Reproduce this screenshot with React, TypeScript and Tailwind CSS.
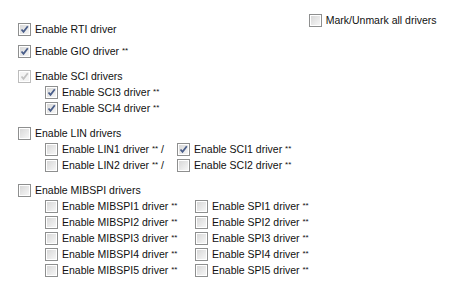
import React, { FC } from "react";

type State = "on" | "off" | "dim";

const Box: FC<{ state?: State }> = ({ state = "off" }) => (
  <span
    className={`relative flex h-[13px] w-[13px] shrink-0 items-center justify-center border ${
      state === "dim" ? "border-[#bcbcbc]" : "border-[#8e8f8f]"
    } bg-white`}
  >
    <span
      className={`absolute inset-[1px] ${
        state === "dim" ? "bg-[#f4f4f4]" : "bg-gradient-to-br from-[#d8d8d8] to-[#f6f6f6]"
      }`}
    />
    {state !== "off" && (
      <svg width="9" height="9" viewBox="0 0 9 9" className="relative">
        <path
          d="M1.5 4.5 L3.5 6.8 L7.8 1.2"
          fill="none"
          stroke={state === "dim" ? "#c2c2c2" : "#4a5e8a"}
          strokeWidth="1.8"
        />
      </svg>
    )}
  </span>
);

// labels ending in "**" get the small raised asterisks of the dialog font
const Label: FC<{ text: string }> = ({ text }) => {
  const i = text.indexOf("**");
  if (i < 0) return <span className="whitespace-nowrap leading-none">{text}</span>;
  return (
    <span className="whitespace-nowrap leading-none">
      {text.slice(0, i)}
      <span className="relative top-[-2px] text-[8px]">**</span>
      {text.slice(i + 2)}
    </span>
  );
};

const Check: FC<{ label: string; state?: State; className?: string }> = ({
  label,
  state = "off",
  className = "",
}) => (
  <div className={`flex h-[16px] items-center gap-[4px] ${className}`}>
    <Box state={state} />
    <Label text={label} />
  </div>
);

const App: FC = () => {
  return (
    <div
      className="relative h-[288px] w-[460px] overflow-hidden bg-white text-[10.5px] text-[#111]"
      style={{ fontFamily: '"Liberation Sans", Arial, sans-serif' }}
    >
      <div className="flex">
        <div className="flex flex-col pl-[18px] pt-[21px]">
          <Check label="Enable RTI driver" state="on" />
          <Check label="Enable GIO driver **" state="on" className="mt-[6px]" />

          <Check label="Enable SCI drivers" state="dim" className="mt-[9px]" />
          <div className="flex flex-col pl-[27px]">
            <Check label="Enable SCI3 driver **" state="on" />
            <Check label="Enable SCI4 driver **" state="on" />
          </div>

          <Check label="Enable LIN drivers" className="mt-[9px]" />
          <div className="grid grid-cols-[132px_auto] pl-[27px]">
            <Check label="Enable LIN1 driver ** /" />
            <Check label="Enable SCI1 driver **" state="on" />
            <Check label="Enable LIN2 driver ** /" />
            <Check label="Enable SCI2 driver **" />
          </div>

          <Check label="Enable MIBSPI drivers" className="mt-[9px]" />
          <div className="grid grid-cols-[150px_auto] pl-[27px]">
            {[1, 2, 3, 4, 5].map((n) => (
              <React.Fragment key={n}>
                <Check label={`Enable MIBSPI${n} driver **`} />
                <Check label={`Enable SPI${n} driver **`} />
              </React.Fragment>
            ))}
          </div>
        </div>
        <div className="ml-auto pr-[28px] pt-[12px]">
          <Check label="Mark/Unmark all drivers" />
        </div>
      </div>
    </div>
  );
};

export default App;
